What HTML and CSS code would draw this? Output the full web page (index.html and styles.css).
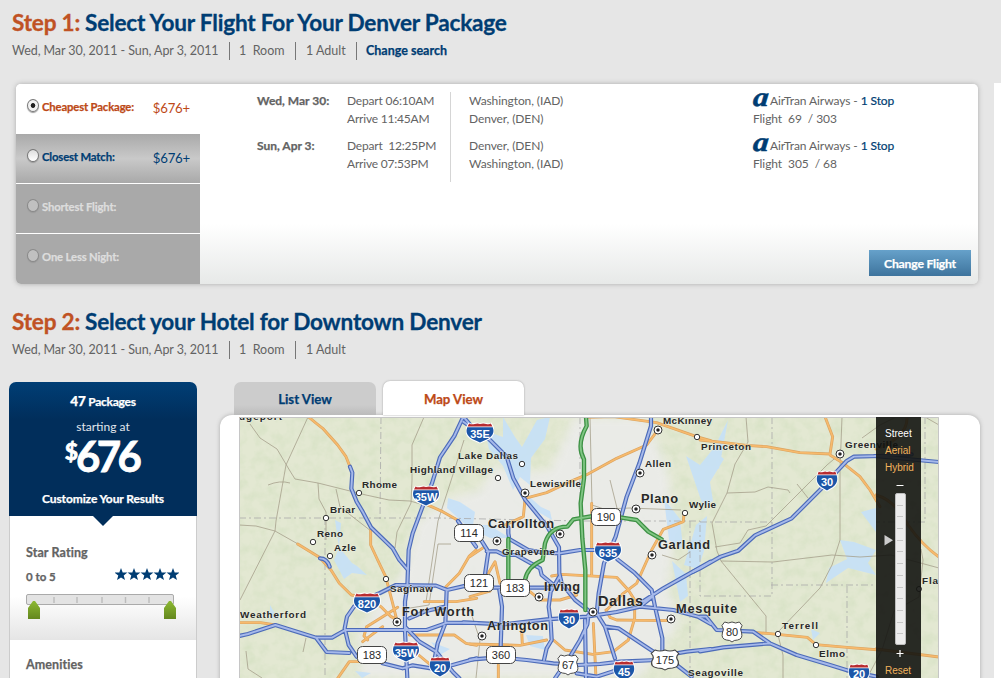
FILE: index.html
```html
<!DOCTYPE html>
<html lang="en">
<head>
<meta charset="utf-8">
<title>Denver Package</title>
<link rel="stylesheet" href="styles.css">
</head>
<body>
<div class="page">
<main class="main">
  <header class="step">
    <h1 class="step-title title-one"><span class="step-no">Step 1:</span><span class="step-name">Select Your Flight For Your Denver Package</span></h1>
    <div class="trip"><span class="dates">Wed, Mar 30, 2011 - Sun, Apr 3, 2011</span><span class="trip-item room">1  Room</span><span class="trip-item adult">1 Adult</span><a class="trip-item change">Change search</a></div>
  </header>

  <section class="flight-panel">
    <div class="options">
      <label class="option active"><i class="radio checked"></i><span class="option-name w1">Cheapest Package:</span><span class="price">$676+</span></label>
      <label class="option match"><i class="radio"></i><span class="option-name">Closest Match:</span><span class="price">$676+</span></label>
      <label class="option off"><i class="radio"></i><span class="option-name">Shortest Flight:</span></label>
      <label class="option off"><i class="radio"></i><span class="option-name">One Less Night:</span></label>
    </div>
    <div class="flight">
      <div class="col days"><p>Wed, Mar 30:</p><p>Sun, Apr 3:</p></div>
      <div class="col times"><p>Depart 06:10AM<br>Arrive 11:45AM</p><p>Depart  12:25PM<br>Arrive 07:53PM</p></div>
      <div class="col places"><p>Washington, (IAD)<br>Denver, (DEN)</p><p>Denver, (DEN)<br>Washington, (IAD)</p></div>
      <div class="col airline"><p><b class="logo">a</b>AirTran Airways - <a>1 Stop</a><br>Flight  69  / 303</p><p><b class="logo">a</b>AirTran Airways - <a>1 Stop</a><br>Flight  305  / 68</p></div>
      <button class="change-flight">Change Flight</button>
    </div>
  </section>

  <header class="step second">
    <h1 class="step-title title-two"><span class="step-no">Step 2:</span><span class="step-name">Select your Hotel for Downtown Denver</span></h1>
    <div class="trip"><span class="dates">Wed, Mar 30, 2011 - Sun, Apr 3, 2011</span><span class="trip-item room">1  Room</span><span class="trip-item adult">1 Adult</span></div>
  </header>

  <div class="hotel">
    <aside class="filters">
      <div class="summary">
        <p class="count"><b>47</b> Packages</p>
        <p class="starting">starting at</p>
        <p class="amount"><sup>$</sup>676</p>
        <p class="customize">Customize Your Results</p>
        <svg class="pointer" width="22" height="11" viewBox="0 0 22 11"><path d="M0 0H22L11 11Z" fill="#012e5b"/></svg>
      </div>
      <section class="filter">
        <h2>Star Rating</h2>
        <div class="range"><span>0 to 5</span>
          <svg class="stars" width="64" height="13" viewBox="0 0 64 13">
            <defs><path id="star" d="M6 0 7.7 4.4 12.4 4.6 8.7 7.6 10 12 6 9.6 2 12 3.3 7.6-.4 4.6 4.3 4.4Z"/></defs>
            <g fill="#003d73"><use href="#star"/><use href="#star" x="13"/><use href="#star" x="26"/><use href="#star" x="39"/><use href="#star" x="52"/></g>
          </svg>
        </div>
        <svg class="slider" width="152" height="26" viewBox="0 0 152 26">
          <defs><linearGradient id="leaf" x2="0" y2="1"><stop stop-color="#8cb932"/><stop offset="1" stop-color="#64871e"/></linearGradient></defs>
          <rect x=".5" y=".5" width="147" height="10" rx="1.5" fill="#e3e3e3" stroke="#aaa"/>
          <path d="M28 3v6M51 3v6M76 3v6M99.5 3v6M123 3v6" stroke="#bbb" stroke-width="1.4"/>
          <path d="M2 25V14L7 7H9L14 14V25ZM138 25V14L143 7H145L150 14V25Z" fill="url(#leaf)"/>
        </svg>
      </section>
      <section class="filter next"><h2>Amenities</h2></section>
    </aside>

    <div class="results">
      <nav class="tabs"><a class="tab">List View</a><a class="tab current">Map View</a></nav>
      <div class="results-panel">
        <div class="map">
<svg class="map-art" width="700" height="261" viewBox="239 417 700 261">
  <defs>
    <filter id="terrain" x="0" y="0" width="100%" height="100%"><feTurbulence type="fractalNoise" baseFrequency=".09" numOctaves="4" seed="8"/><feColorMatrix values="0 0 0 0 .66  0 0 0 0 .75  0 0 0 0 .54  1.5 0 0 0 -.58"/></filter>
    <filter id="soft"><feGaussianBlur stdDeviation="5"/></filter>
    <symbol id="interstate" viewBox="0 0 28 22" preserveAspectRatio="none">
      <path d="M3 .5Q5 2 8 1Q11 0 14 1Q17 0 20 1Q23 2 25 .5L27 4Q30 14 22 18Q17 20 14 21.5Q11 20 6 18Q-2 14 1 4Z" fill="#fff"/>
      <path d="M3.5 1.4Q6 3 9 1.9Q12 1.2 14 2Q17 1 20 1.9Q23 2.7 24.5 1.4L26 4.4H2Z" fill="#b82c30"/>
      <path d="M1.700 5.200H26.300Q29 13 21.500 17Q17.500 18.800 14 20.500Q10.500 18.800 6.500 17Q-1 13 1.700 5.200Z" fill="#1c56a8"/>
    </symbol>
    <symbol id="us" viewBox="0 0 24 22" preserveAspectRatio="none"><path d="M4 1Q8 3 12 1Q16 3 20 1L23 4.5Q20 8 22.5 12Q24 18 18 19Q14 19 12 21Q10 19 6 19Q0 18 1.5 12Q4 8 1 4.5Z" fill="#fff" stroke="#444"/></symbol>
    <g id="blue">
      <g transform="translate(236 410) scale(.33333)">
        <path d="M682 20 655 78 612 142 588 220 562 284 530 370 518 420 514 530 507 575V665L514 805M682 20 720 65M342 170 349 188 346 236 362 275 380 305 405 352 470 415 490 450 516 480M252 445Q273 445 281 470M666 333 720 410M0 680 36 672 118 645 240 683H288L328 660H572L634 638 722 639M240 683 272 726 340 729M362 740 338 705 326 655 333 620 354 590 398 564 432 549 480 525 600 527 633 540 690 527M632 540 628 640 605 700 594 755M507 650 550 695 600 725 650 785 670 805M440 760 500 775 530 766 590 776 650 765 722 745M520 625 570 603 628 590"/>
      </g>
      <g transform="translate(470 410) scale(.33333)">
        <path d="M-20 35 60 90 110 140 130 205 166 270 232 350 267 412 268 490 275 520 315 570 360 605M543 20V48L508 160 470 260 437 380 402 460 386 550 380 610M115 352V370L118 387 175 420 215 427 268 430 330 420H385M442 448 492 487 545 540 555 590 577 685V725M30 385 55 425 44 500M50 424H80L100 434 138 435 210 475 215 495 245 520M65 533H245M88 540 96 590 92 712M-20 637 100 643 230 628 350 620 440 606 510 590 610 600 684 620 722 642M510 590 545 562M355 615 352 643 330 690 300 740 255 805M268 500 242 545 236 590 242 635 245 690 230 715 222 750M0 749 85 742 170 750 250 760 322 765 390 762 450 755 560 750 580 737 650 725 722 717M345 630 348 805M380 610 405 650 435 745M408 650 445 655 520 705 570 738M320 790 380 800 442 780M620 765 665 800M510 580 580 535 722 455"/>
      </g>
      <g transform="translate(700 410) scale(.33333)">
        <path d="M0 475 62 440 115 422 165 376 275 325 380 220 410 185 440 153 462 140 540 138 635 133M0 620H18L50 660 160 665 210 700 290 735 390 765 455 785 530 800M0 724 70 712 140 706 210 700M-20 485 0 475"/>
      </g>
      <path d="M875 456 939 462"/>
    </g>
    <g id="orange">
      <g transform="translate(236 410) scale(.33333)"><path d="M214 18Q240 40 260 55L305 105 330 140 342 170M578 286 620 305 668 332M185 402 250 442 285 480 310 520 346 555 388 562 435 590 465 620 490 632M404 360V405L425 450 449 500 470 580 485 640M385 755 340 755 305 805M0 638H74L118 645M630 530 670 490 700 438 720 420M565 575H660L722 565M380 695 440 650M395 690 384 678 392 650 440 620 485 592M520 675H655L690 700 722 706M548 735 590 770"/></g>
      <g transform="translate(470 410) scale(.33333)"><path d="M165 265 230 248 300 215 350 194 440 145 530 105 560 65M165 270 160 320 105 345M350 22 430 20 560 38 680 80 722 92M365 280V495M642 310 640 335 580 358 545 420 500 520 460 550 410 600M245 498 275 493 440 502 475 540 494 570V625L475 690 430 725 368 733 285 720 250 690M0 560 60 543M180 545 210 570 270 570 320 555M0 702 150 706 230 690M55 490 75 455 90 520M0 440 40 413M85 765V805M370 640 378 805M408 600 420 622 440 630 600 632M155 660 157 705"/></g>
      <g transform="translate(700 410) scale(.33333)"><path d="M0 90 74 98 140 106 200 110 300 128 390 132 398 80 375 20M390 135 430 160 480 200 510 240 540 290M160 667 210 671 322 682 348 704 450 713 540 720"/></g>
      <path d="M876 495 Q895 500 908 525Q923 546 939 557M876 649 939 657M876 449 Q908 437 907 417"/>
    </g>
    <g id="green"><g transform="translate(470 410) scale(.33333)"><path d="M348 20 350 48Q318 105 342 148V205L332 280 337 385 346 480V600M115 387V535M165 510Q172 470 218 450L225 400Q240 350 292 350L310 328 370 318M450 322 500 330 535 365 575 388"/></g></g>
  </defs>
  <rect x="239" y="417" width="700" height="261" fill="#e3e8d2"/>
  <rect x="239" y="417" width="700" height="261" filter="url(#terrain)"/>
  <g fill="#ececeb" opacity=".88" filter="url(#soft)">
    <path d="M360 678 358 635 382 596 402 575 418 520 450 498 480 490 495 465 520 473 550 470 574 417H646L668 470 675 535 668 585 680 622 640 678Z"/>
  </g>
  <g fill="#c6e1f8" opacity=".9">
    <path d="M503 417 515 437 522 447 537 420 550 417 545 439 531 458 530 485 520 477 513 490 503 466 489 449 485 431 503 437ZM448 498 460 502 475 512 473 525 489 525 510 538 490 538 468 527 447 508Z"/>
    <path d="M335 520 341 523 339 547 352 563 357 566 367 575 352 573 344 579 334 560 339 548ZM525 493 541 507 550 511 552 520 533 509ZM664 499 680 519 683 549 669 540ZM672 561 686 574 688 596 680 602ZM686 456 700 465 713 449 724 459 710 482 713 501 703 506ZM708 462 719 438 728 420 719 469ZM696 525 707 516 704 551 698 569 684 565ZM840 540 854 542 876 550 868 563 876 575 848 568 826 583 829 568 847 559ZM876 508 861 512 876 532ZM355 671 371 673 362 678ZM431 642 450 649 440 655Z"/>
    <path d="M270 605 274 612 279 620 270 617ZM526 635 543 636 545 650 530 646ZM811 629 820 633 813 640Z"/>
  </g>
  <g fill="none" stroke="#aaa" stroke-dasharray="7 3 2 3" stroke-width=".8"><path d="M381 417 380 519M239 518 440 518 580 521H700V596H772V417M325 518V678M580 417V525M700 522H772M771 585H876M847 586V678M925 417V522H876M690 521V678"/></g>
  <g fill="none" stroke="#a6a08c" stroke-width=".8">
    <path d="M250 424 260 438 277 449 290 471 295 479 318 483 366 495M308 417 286 465 276 521 275 531 240 600M268 485Q280 480 290 483M318 483 319 499 326 512V540M336 489 340 507 371 531M239 525 256 526 275 531 298 544M366 495 389 500 410 501 438 509M424 417 412 445 412 480 411 503 397 532 395 548M464 440 448 490 438 521 426 602M246 651 248 669 262 678M306 638 303 652M410 608 429 605 438 544 451 544"/>
    <path d="M590 417 592 505 604 509 630 508 681 510M662 555 678 560 690 552M746 417 748 442 735 464 727 493 712 523 717 551 721 561 766 616V634M727 493 755 492 768 487 788 490 790 493M766 526 748 530 740 543 715 547M766 526 827 465 840 454M797 484 808 498M842 417 840 470V540L832 565 820 588 778 632M721 561 773 562 832 555 860 557 891 555 939 568M862 438 880 425 896 417M921 549 923 560 919 597 894 611 882 650 867 678M778 635 783 655V678M939 425 925 417M470 610 480 640 476 678M610 480 620 520"/>
  </g>
  <g fill="none" stroke-linejoin="round" stroke-linecap="round">
    <use href="#orange" class="orange-edge"/><use href="#orange" class="orange-core"/>
    <use href="#blue" class="blue-edge"/><use href="#blue" class="blue-core"/>
    <use href="#green" class="green-edge"/><use href="#green" class="green-core"/>
  </g>
  <use href="#interstate" x="465.5" y="422" width="29" height="22"/><use href="#interstate" x="412" y="485" width="28" height="22"/><use href="#interstate" x="353" y="592" width="28" height="22"/><use href="#interstate" x="392" y="641" width="28" height="22"/><use href="#interstate" x="429" y="656" width="22" height="22"/><use href="#interstate" x="594" y="541" width="28" height="22"/><use href="#interstate" x="558" y="608" width="22" height="22"/><use href="#interstate" x="816" y="470" width="22" height="22"/><use href="#interstate" x="613" y="660" width="22" height="22"/><use href="#interstate" x="848" y="663" width="22" height="22"/>
  <g fill="#fff" stroke="#444"><rect x="454.500" y="524.500" width="29" height="17" rx="5"/><rect x="464.500" y="574.500" width="29" height="17" rx="5"/><rect x="500.500" y="579.500" width="29" height="17" rx="5"/><rect x="591.500" y="508.500" width="29" height="17" rx="5"/><rect x="357.500" y="646.500" width="29" height="17" rx="5"/><rect x="486.500" y="646.500" width="29" height="17" rx="5"/></g>
  <use href="#us" x="721" y="621" width="22" height="22"/><use href="#us" x="557" y="654" width="22" height="22"/><use href="#us" x="650" y="649" width="30" height="22"/>
  <g class="route-blue"><text x="480" y="437.500">35E</text><text x="426" y="500.500">35W</text><text x="367" y="607.500">820</text><text x="406" y="656.500">35W</text><text x="440" y="671.500">20</text><text x="608" y="556.500">635</text><text x="569" y="623.500">30</text><text x="827" y="485.500">30</text><text x="624" y="675.500">45</text><text x="859" y="678">20</text></g>
  <g class="route"><text x="469" y="537">114</text><text x="479" y="587">121</text><text x="515" y="592">183</text><text x="606" y="521">190</text><text x="372" y="659">183</text><text x="501" y="659">360</text><text x="732" y="636">80</text><text x="568" y="669">67</text><text x="665" y="664">175</text></g>
  <g class="dot"><circle cx="359" cy="493" r="2.700"/><circle cx="326" cy="518" r="2.700"/><circle cx="313" cy="542" r="2.700"/><circle cx="330" cy="556" r="2.700"/><circle cx="386" cy="579" r="2.700"/><circle cx="522" cy="464" r="2.700"/><circle cx="498" cy="478" r="2.700"/><circle cx="697" cy="437" r="2.700"/><circle cx="685" cy="513" r="2.700"/><circle cx="778" cy="634" r="2.700"/><circle cx="816" cy="645" r="2.700"/><circle cx="919" cy="589" r="2.500"/>
    <circle cx="397" cy="622" r="4"/><circle cx="525" cy="493" r="4"/><circle cx="560" cy="534" r="4"/><circle cx="497" cy="541" r="4"/><circle cx="539" cy="597" r="4"/><circle cx="482" cy="636" r="4"/><circle cx="593" cy="612" r="4"/><circle cx="671" cy="619" r="4"/><circle cx="652" cy="555" r="4"/><circle cx="636" cy="509" r="4"/><circle cx="640" cy="473" r="4"/><circle cx="658" cy="430" r="4"/><circle cx="840" cy="454" r="4"/></g>
  <path d="M397 622h0M525 493h0M560 534h0M497 541h0M539 597h0M482 636h0M593 612h0M671 619h0M652 555h0M636 509h0M640 473h0M658 430h0M840 454h0" stroke="#222" stroke-width="3.500" stroke-linecap="round"/>
  <g class="town">
    <text x="239" y="419.500" textLength="43">dgeport</text><text x="362" y="488" textLength="35">Rhome</text><text x="330" y="513" textLength="25">Briar</text><text x="317" y="537" textLength="26">Reno</text><text x="334" y="551" textLength="22">Azle</text><text x="390" y="592" textLength="43">Saginaw</text><text x="240" y="618" textLength="66">Weatherford</text><text x="458" y="459" textLength="60">Lake Dallas</text><text x="410" y="473" textLength="83">Highland Village</text><text x="530" y="487" textLength="51">Lewisville</text><text x="502" y="555" textLength="53">Grapevine</text><text x="663" y="424" textLength="49">McKinney</text><text x="645" y="467" textLength="26">Allen</text><text x="701" y="450" textLength="50">Princeton</text><text x="689" y="508" textLength="27">Wylie</text><text x="845" y="448" textLength="53">Greenville</text><text x="782" y="629" textLength="36">Terrell</text><text x="819" y="657" textLength="26">Elmo</text><text x="688" y="676" textLength="55">Seagoville</text><text x="922" y="584" textLength="16">Fla</text>
  </g>
  <g class="city"><text x="402" y="616" textLength="72">Fort Worth</text><text x="488" y="528" textLength="66">Carrollton</text><text x="487" y="630" textLength="61">Arlington</text><text x="544" y="591" textLength="36">Irving</text><text x="641" y="503" textLength="37">Plano</text><text x="658" y="549" textLength="52">Garland</text><text x="676" y="613" textLength="61">Mesquite</text></g>
  <text class="metro" x="598" y="606" textLength="45">Dallas</text>
  <path d="M239.500 678V417.500H938.500V678" fill="none" stroke="#c6c6c6"/>
</svg>
          <div class="controls">
            <a class="mode on">Street</a><a class="mode">Aerial</a><a class="mode">Hybrid</a>
            <svg class="zoomer" width="45" height="180" viewBox="876 480 45 180">
              <path d="M896.500 485.500h7M896.500 653.500h7M900 650v7" stroke="#fff" stroke-width="1.2"/>
              <rect x="895.500" y="493.500" width="10" height="151" rx="1.500" fill="#ececec" stroke="#bdbdbd"/>
              <path d="M897 505.500h6M897 516.500h6M897 528.500h6M897 540.500h6M897 551.500h6M897 563.500h6M897 575.500h6M897 587.500h6M897 598.500h6M897 610.500h6M897 622.500h6M897 633.500h6" stroke="#c6c6c6"/>
              <path d="M884.500 535v10.500L893 540.200Z" fill="#ccc"/>
            </svg>
            <a class="mode">Reset</a>
          </div>
        </div>
      </div>
    </div>
  </div>
</main>
<div class="gutter"></div>
</div>
</body>
</html>
```
FILE: styles.css
```css
* { box-sizing: border-box; }
body { margin: 0; background: #e6e6e6; color: #636363; font-family: Lato, sans-serif; font-size: 12.5px; overflow: hidden; }
p, h1, h2 { margin: 0; }
.page { display: flex; width: 1001px; height: 678px; overflow: hidden; }
.main { width: 994px; flex: none; display: flex; flex-direction: column; }
.gutter { flex: 1; margin-top: 83px; background: #fff; }

.step { height: 84px; padding: 8px 12px 0; flex: none; }
.step.second { height: 97px; margin-top: 0; padding-top: 23px; }
.step-title { display: flex; height: 30px; line-height: 30px; font-size: 22.6px; font-weight: 700; white-space: pre; color: #003d73; -webkit-text-stroke: .3px; }
.step-no { width: 73px; color: #c05224; letter-spacing: -.2px; }
.step-name { letter-spacing: -.2px; }
.trip { display: flex; align-items: center; height: 18px; margin-top: 4px; line-height: 18px; white-space: pre; }
.dates { width: 217px; letter-spacing: -.07px; }
.trip-item { padding-left: 9px; border-left: 1px solid #777; }
.room { width: 66px; }
.adult { width: 61px; padding-left: 10px; }
.change { color: #003d73; font-weight: 700; letter-spacing: 0; }
.change, .option-name, .days, .customize, .count, .filter h2, .range, .tab, .change-flight { -webkit-text-stroke: .25px; }

.flight-panel { display: flex; flex: none; width: 962px; height: 200px; margin-left: 16px; background: linear-gradient(#fff 70%, #e7e9e8); border-radius: 5px; box-shadow: 0 0 5px #aaa; overflow: visible; }
.options { width: 184px; }
.option { display: flex; height: 50px; padding: 15px 10px 0 11px; background: #a9a9a9; border-bottom: 1px solid #fff; color: #ddd; font-weight: 700; font-size: 11.3px; }
.option.active { background: #fff; border: 0; color: #bd4917; border-top-left-radius: 5px; }
.option.match { background: linear-gradient(#a9a9a9, #c9c9c9 50%, #a9a9a9); color: #003d73; }
.option:last-child { border: 0; border-bottom-left-radius: 5px; }
.radio { width: 12px; height: 13px; border: 1px solid #777; border-radius: 50%; background: linear-gradient(#ddd, #fff); box-shadow: 0 1px 1px #999; }
.radio.checked { background: radial-gradient(circle, #222 2px, #f3f3f3 2.7px); }
.off .radio { background: #c0c0c0; border-color: #898989; }
.option-name { margin: 0 0 0 3px; line-height: 16px; letter-spacing: -.15px; white-space: nowrap; }
.price { margin-left: auto; font-weight: 400; font-size: 13.2px; line-height: 19px; letter-spacing: -.2px; }

.flight { position: relative; flex: 1; display: flex; padding: 8px 0 0 57px; font-size: 12px; line-height: 19px; white-space: pre; }
.col { display: flex; flex-direction: column; gap: 9px; height: 90px; }
.col p { height: 36px; line-height: 18px; }
.days { width: 90px; font-weight: 700; }
.times { width: 104px; border-right: 1px solid #d5d5d5; letter-spacing: -.2px; }
.places { width: 302px; padding-left: 18px; letter-spacing: -.1px; }
.airline { letter-spacing: -.08px; }
.airline a { color: #003d73; -webkit-text-stroke: .2px; }
.logo { display: inline-block; width: 17px; height: 18px; vertical-align: top; font: italic 700 27px/11px "Liberation Serif", serif; color: #003d73; -webkit-text-stroke: .5px; transform: skewX(-5deg) scaleX(1.15); transform-origin: 0 50%; }
.change-flight { position: absolute; right: 7px; bottom: 8px; width: 102px; height: 26px; border: 0; padding: 0; background: linear-gradient(#66a1ca, #3e749d); color: #fff; font: 700 12.2px Lato, sans-serif; letter-spacing: -.2px; }

.hotel { display: flex; height: 297px; padding-left: 9px; }
.filters { width: 188px; margin-top: 1px; }
.summary { position: relative; height: 134px; padding-top: 9px; text-align: center; color: #fff; background: linear-gradient(#003e75, #012e5b 28%); border-radius: 7px 7px 0 0; }
.count { font-weight: 700; font-size: 12px; line-height: 20px; letter-spacing: -.25px; }
.count b { font-size: 13.5px; }
.starting { font-size: 12px; line-height: 18px; margin-top: 6px; color: #e2e7ed; }
.amount { font-size: 42px; font-weight: 700; line-height: 40px; letter-spacing: -3.6px; height: 44px; padding-right: 3px; -webkit-text-stroke: .8px; }
.amount sup { font-size: 23px; vertical-align: 12px; line-height: 0; letter-spacing: -2px; }
.customize { font-weight: 700; font-size: 12px; line-height: 18px; margin-top: 10px; letter-spacing: -.1px; }
.pointer { position: absolute; left: 83px; top: 133px; }
.filter { height: 124px; padding: 28px 16px 0; background: linear-gradient(#fff 65%, #e5e5e5); border: solid #ccc; border-width: 0 1px; }
.filter h2 { font-size: 12.5px; line-height: 18px; letter-spacing: .1px; }
.range { display: flex; justify-content: space-between; margin-top: 5px; font-weight: 700; font-size: 11.5px; line-height: 20px; }
.stars { margin: 1px 1px 0 0; }
.slider { display: block; margin-top: 7px; }
.next { height: 45px; padding-top: 16px; background: #fff; }

.results { margin-left: 23px; width: 760px; }
.tabs { display: flex; height: 34px; padding-left: 14px; gap: 7px; }
.tab { width: 142px; height: 33px; margin-top: 1px; border-radius: 7px 7px 0 0; background: linear-gradient(#ccc 70%, #bbb); color: #003d73; text-align: center; font-weight: 700; font-size: 13.2px; line-height: 34px; }
.tab.current { width: 141px; height: 34px; margin-top: 0; background: #fff; color: #bd4917; box-shadow: 0 0 2px #999; line-height: 36px; }
.results-panel { height: 300px; padding: 2px 0 0 19px; background: #fff; border-radius: 12px 12px 0 0; box-shadow: 0 0 4px #aaa; }
.map { position: relative; width: 700px; height: 261px; }
.map-art { display: block; }
.orange-edge { stroke: #dba461; stroke-width: 2.9px; }
.orange-core { stroke: #f7ba6d; stroke-width: 1.6px; }
.blue-edge { stroke: #4c6bb9; stroke-width: 4.2px; }
.blue-core { stroke: #a6b9ea; stroke-width: 1.9px; }
.green-edge { stroke: #3d9144; stroke-width: 4.4px; }
.green-core { stroke: #80c684; stroke-width: 1.8px; }
#blue path, #orange path, #green path { vector-effect: non-scaling-stroke; }
.dot { fill: #fff; stroke: #333; stroke-width: 1px; }
.map-art text { font-family: "Liberation Sans", Arial, sans-serif; fill: #282828; }
.town text, .city text, .metro { font-weight: 700; paint-order: stroke; stroke: rgba(240,243,230,.65); stroke-width: 1px; }
.town text { font-size: 9.9px; }
.city text { font-size: 12.8px; }
.map-art .metro { font-size: 14.5px; }
.map-art .route text { font-size: 11px; text-anchor: middle; }
.map-art .route-blue text { font-size: 11px; font-weight: 700; fill: #fff; text-anchor: middle; }
.controls { position: absolute; left: 637px; top: 0; width: 45px; height: 261px; padding-top: 8px; background: rgba(17,18,15,.89); font: 10px/17px "Liberation Sans", Arial, sans-serif; }
.mode { display: block; padding-left: 9px; color: #f2b35d; }
.mode.on { color: #fff; }
.zoomer { display: block; margin: 4px 0 2px; }
```
